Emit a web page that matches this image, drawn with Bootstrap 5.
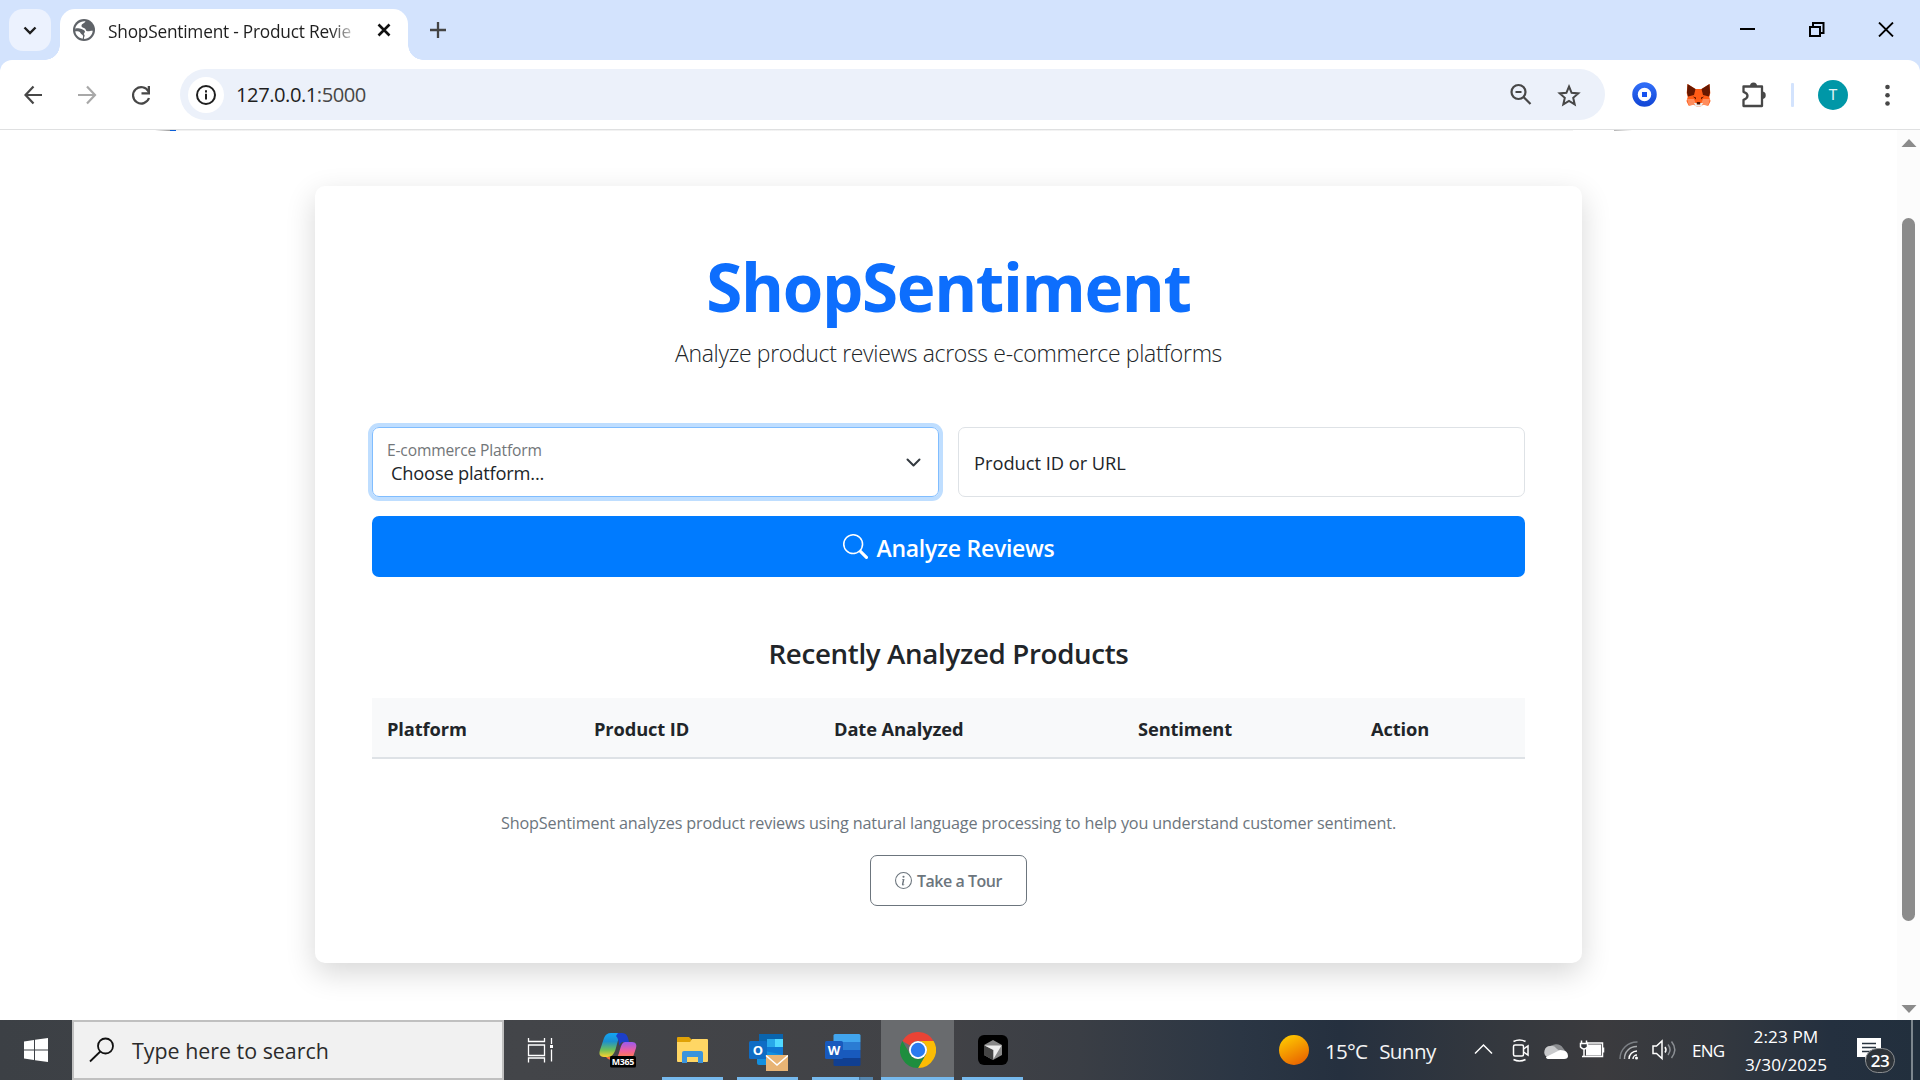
<!DOCTYPE html>
<html lang="en">
<head>
<meta charset="utf-8">
<title>ShopSentiment - Product Review Analysis</title>
<link href="https://cdn.jsdelivr.net/npm/bootstrap@5.3.0/dist/css/bootstrap.min.css" rel="stylesheet">
<style>
body{width:1920px;height:1080px;overflow:hidden;font-family:"Open Sans","Noto Sans",sans-serif;color:#212529;background:#fff}
svg{display:block;flex:none}
.tx{white-space:nowrap}
/* tab strip */
.tabstrip{height:60px;background:#d3e3fd}
.tab-search{width:42px;height:42px;margin:9px 9px 9px 9px;border-radius:14px;background:#ecf2fe}
.tab-active{width:348px;height:51px;margin-top:9px;border-radius:15px 15px 0 0;background:#fff;position:relative;padding:0 0 9px 13px}
.tab-active::before,.tab-active::after{content:"";position:absolute;bottom:0;width:15px;height:15px}
.tab-active::before{left:-15px;background:radial-gradient(circle at 0 0,transparent 14.5px,#fff 15px)}
.tab-active::after{right:-15px;background:radial-gradient(circle at 100% 0,transparent 14.5px,#fff 15px)}
.tab-name{font-size:17.3px;letter-spacing:-.22px;width:251px;margin-left:13px;padding-top:3px;color:#1f1f1f;-webkit-mask-image:linear-gradient(90deg,#000 222px,transparent 251px)}
/* toolbar */
.toolbar-wrap{height:70px;background:#d3e3fd}
.toolbar{height:70px;background:#fff;border-bottom:1px solid #dfe0e1;border-radius:12px 12px 0 0;padding:9px 0 0 0}
.omnibox{width:1425px;height:51px;border-radius:26px;background:#ecf1fa;margin-left:24px}
.site-info{width:36px;height:36px;border-radius:50%;background:#fff;margin-left:8px}
.url{font-size:20.2px;letter-spacing:-.48px;color:#1f1f1f;margin-left:12px}
.url .port{color:#474747}
.avatar-t{width:30px;height:30px;border-radius:50%;background:#0097a7;color:#e4f4f6;font-size:15px;font-family:Roboto,sans-serif}
/* page */
.viewport{height:890px}
.nav-edge{height:1px;background:linear-gradient(90deg,#fff 155px,#999 170px,#0b5ed7 170px,#0b5ed7 176px,#f1f1f1 176px,#f4f4f4 1573px,#fff 1573px,#fff 1614px,#b5b5b5 1614px,#fff 1632px)}
.page-pane{width:1897px}
.main-card{width:1267px;height:777px;margin:55px 0 0 315px;padding:57px;border-radius:10px;background:#fff;box-shadow:0 10px 30px rgba(0,0,0,.16)}
.hero{font-size:65.5px;letter-spacing:-1.35px;line-height:80px;font-weight:700;color:#0d6efd;margin-top:4px}
.sub{font-size:23px;letter-spacing:-.336px;line-height:36px;font-weight:300;margin-top:8px}
.fields{margin-top:56px;gap:19px}
.field{height:70px;border:1px solid #dee2e6;border-radius:7px;flex:1;padding:1px 15px 0}
.field.on{border-color:#80bdff;box-shadow:0 0 0 4px #bfdeff}
.f-label{font-size:15.6px;letter-spacing:-.16px;line-height:20px;color:#727679;margin-left:-1px}
.f-value{font-size:18.3px;letter-spacing:-.21px;line-height:26px;margin-left:3px}
.m-pid{letter-spacing:-.03px}
.go{height:62px;margin-top:19px;padding-top:3px;border-radius:7px;background:#007bff;color:#fff;font-size:23px;letter-spacing:-.265px;font-weight:600;gap:9px}
.go svg{margin-top:-3px}
.sec{font-size:27.7px;letter-spacing:-.33px;line-height:36px;font-weight:600;margin-top:58px}
.grid-head{margin:27px 0 0;width:1153px;table-layout:fixed}
.grid-head th{height:60px;background:#f8f9fa;border-bottom:2px solid #dee2e6;font-size:18.3px;letter-spacing:-.12px;line-height:28px;font-weight:700;padding:2px 0 0 15px;vertical-align:middle}
.note{font-size:16.2px;letter-spacing:-.156px;line-height:26px;color:#6c757d;margin-top:51px}
.tour{width:157px;height:51px;border:1px solid #6c757d;border-radius:7px;color:#6c757d;font-size:16px;letter-spacing:-.47px;font-weight:600;margin-top:19px;gap:5px}
.sbar{width:23px;background:#fcfcfc}
.sthumb{width:13px;height:703px;border-radius:7px;background:#8b8b8b}
/* taskbar */
.taskbar{height:60px;background:linear-gradient(90deg,#3c4045 0,#434549 520px,#414246 950px,#3a3e45 1080px,#2b3644 1240px,#25303f 1340px,#34383e 1500px,#3b3b3e 1600px,#33383f 1720px,#24303f 1830px,#222f3d 1920px);color:#fff}
.start{width:72px}
.find{width:432px;height:60px;border:2px solid #c0c0c0;background:#f1f1f1;color:#2b2b2b;padding-left:15px;font-size:21.4px}
.app{width:75px;height:60px}
.app .bar{height:3px;width:61px;background:#76b9ed}
.app.cur{background:#696b6e}
.app.cur .bar{width:73px}
.app.cur{width:73px;margin:0 1px}
.wx{font-size:20.6px;letter-spacing:-.6px;color:#f4f4f4;padding-top:3px}
.m-deg{letter-spacing:-.8px}
.tray-t{font-size:17px;letter-spacing:-.8px;color:#fff;padding-top:1px}
.clock{width:110px;font-size:17.2px;line-height:28px;letter-spacing:.08px;margin-top:1px}
.count-b{top:11px;width:30px;height:25px;border-radius:13px;background:#2d3339;border:1px solid #8a8d90;font-size:17px;letter-spacing:-.5px;font-weight:600;line-height:23px}
</style>
<script src="https://cdn.jsdelivr.net/npm/bootstrap@5.3.0/dist/js/bootstrap.bundle.min.js"></script>
</head>
<body>
<header>
 <div class="tabstrip d-flex">
  <div class="tab-search d-flex align-items-center justify-content-center"><svg width="14" height="9" fill="none" stroke="#1f1f1f" stroke-width="2.4"><path d="M1.5 1.5 7 7l5.500-5.500"/></svg></div>
  <div class="tab-active d-flex align-items-center">
   <svg width="22" height="22" viewBox="0 0 22 22"><circle cx="11" cy="11" r="11" fill="#5f6368"/><path fill="#fff" d="M12.500 2.300C11 5 8.500 4.500 8.500 7c0 1.800 2.200 1.500 3.400 2.500 1.200 1 .8 2.600 2.600 2.800 2 .2 3.300-.9 5.200-.6-.3 4.700-4 8-8.500 8.200-.9-1.200.6-2.200.4-3.600-.2-1.300-1.800-1.300-2-2.700-.2-1.200.6-2-.5-2.700-1.600-.9-4.600-.6-6.900-.6C2.300 6 7 1.700 12.500 2.300z"/><path fill="#5f6368" d="M2.200 9.500C4.500 9.300 6.500 9 8.500 10c1.600.9 3 .8 3.400 2.300.3 1.300-.9 1.700-1.200 3H6.500L3 12z"/><path fill="#fff" d="M2.300 12.300c2.400-.1 4.300.1 5.200 1.700.8 1.600 2.200 1.500 2.500 3 .2 1-.2 1.700-.3 2.700C5.500 19.100 2.600 16 2.300 12.300z"/></svg>
   <div class="tab-name tx">ShopSentiment - Product Revie</div>
   <svg class="ms-auto" style="margin-right:17px" width="14" height="14" stroke="#111" stroke-width="2.600"><path d="M1.500 1.500l11 11M12.500 1.500l-11 11"/></svg>
  </div>
  <svg style="margin:22px 0 0 22px" width="16" height="16" stroke="#444" stroke-width="2.300"><path d="M8 0v16M0 8h16"/></svg>
  <svg class="ms-auto" style="margin:22px 26px 0 0" width="154" height="15" fill="none" stroke="#000" stroke-width="2"><path d="M0 7h15"/><path d="M70 5h10v9h-10zM73 5V1h10.500v10h-3.500"/><path stroke-width="1.800" d="M139 .5l14 14M153 .5l-14 14"/></svg>
 </div>
 <div class="toolbar-wrap"><div class="toolbar d-flex">
  <svg style="margin:0 0 0 24px" width="132" height="51" fill="none" stroke="#474747" stroke-width="2.200"><path d="M18 26H1.500M9.500 17.500 1.500 26l8 8.500"/><path stroke="#a8a8a8" d="M54 26h17M63 17.500 71 26l-8 8.500"/><path d="M124.500 22.500A8.200 8.200 0 1 0 125 29"/><path fill="#474747" stroke="none" d="M126 17v8.500h-8.500v-2.200h6.200V17z"/></svg>
  <div class="omnibox d-flex align-items-center">
   <div class="site-info d-flex align-items-center justify-content-center"><svg width="20" height="20" fill="none" stroke="#1f1f1f" stroke-width="2"><circle cx="10" cy="10" r="9"/><path d="M10 8.800v5.700M10 5.300v2.200"/></svg></div>
   <div class="url tx">127.0.0.1<span class="port">:5000</span></div>
   <svg class="ms-auto" style="margin-right:24px" width="72" height="24" fill="none" stroke="#474747" stroke-width="2.200"><circle cx="9.500" cy="9" r="7"/><path d="M14.500 14l7 7M6.500 9h6"/><path stroke-width="2" d="M60 3.500l2.600 6.300 6.700.6-5.100 4.400 1.500 6.600-5.700-3.500-5.700 3.500 1.500-6.600-5.100-4.400 6.700-.6z"/></svg>
  </div>
  <svg style="margin-left:27px" width="175" height="51" viewBox="0 0 175 51">
   <defs><linearGradient id="cb" x2="0" y2="1"><stop stop-color="#2f6cf6"/><stop offset="1" stop-color="#1449d8"/></linearGradient></defs>
   <circle cx="12.500" cy="25.500" r="9.500" fill="#fff" stroke="url(#cb)" stroke-width="5.500"/><rect x="10" y="23" width="5" height="5" fill="#1652f0"/>
   <path fill="#ff5c16" d="M55.500 15l8 5h6l8-5 .8 9-1 4 1.200 4-2 4.500-5-1-3 2h-4l-3-2-5 1-2-4.500 1.200-4-1-4z"/><path fill="#661800" d="M55.500 15l8 5-1.500 6-6 1.500-1-4zM77.500 15l-8 5 1.500 6 6 1.500 1-4z"/><path fill="#ff8d5d" d="M55 30l7 0 2 5-7 2zM78 30l-7 0-2 5 7 2z"/><path fill="#eee" d="M62 34h9l-1.500 3.500h-6z"/><path fill="#551500" d="M61 27.500l3 1v2zM72 27.500l-3 1v2zM64.800 33h3.400v2.500h-3.400z"/>
   <path fill="none" stroke="#474747" stroke-width="2.300" stroke-linejoin="round" d="M111.500 17.500h18.500v19.500h-18.500v-6.200q4-1.300 4-4t-4-4z"/><path fill="#474747" d="M118 17a3.500 3.500 0 0 1 7 0zM130 22.500a3.500 3.500 0 0 1 0 7.500z"/>
   <rect x="159" y="14" width="3" height="24" rx="1" fill="#d3e3fd"/>
  </svg>
  <div class="avatar-t d-flex align-items-center justify-content-center" style="margin:11px 0 0 11px">T</div>
  <svg style="margin-left:36px" width="8" height="51" fill="#474747"><circle cx="3.500" cy="18" r="2.300"/><circle cx="3.500" cy="26.200" r="2.300"/><circle cx="3.500" cy="34.500" r="2.300"/></svg>
 </div></div>
</header>
<main class="viewport d-flex">
 <section class="page-pane">
  <div class="nav-edge"></div>
  <div class="main-card d-flex flex-column">
   <h1 class="hero text-center mb-0"><span class="tx">ShopSentiment</span></h1>
   <p class="sub text-center mb-0"><span class="tx">Analyze product reviews across e-commerce platforms</span></p>
   <div class="fields d-flex">
    <div class="field on d-flex align-items-center justify-content-between">
     <div><div class="f-label tx">E-commerce Platform</div><div class="f-value tx">Choose platform...</div></div>
     <svg width="15" height="9" style="margin-right:2px" fill="none" stroke="#343a40" stroke-width="2" stroke-linecap="round" stroke-linejoin="round"><path d="M1.500 1.500l6 6 6-6"/></svg>
    </div>
    <div class="field d-flex align-items-center"><span class="tx f-value ms-0 m-pid">Product ID or URL</span></div>
   </div>
   <div class="go d-flex align-items-center justify-content-center">
    <svg width="25" height="25" viewBox="0 0 16 16" fill="#fff"><path d="M11.742 10.344a6.500 6.500 0 1 0-1.397 1.398h-.001c.03.04.062.078.098.115l3.850 3.850a1 1 0 0 0 1.415-1.414l-3.850-3.850a1.007 1.007 0 0 0-.115-.1zM12 6.500a5.500 5.500 0 1 1-11 0 5.500 5.500 0 0 1 11 0z"/></svg>
    <span class="tx">Analyze Reviews</span>
   </div>
   <h2 class="sec text-center mb-0"><span class="tx">Recently Analyzed Products</span></h2>
   <table class="grid-head"><colgroup><col style="width:207px"><col style="width:240px"><col style="width:304px"><col style="width:233px"><col></colgroup>
    <thead><tr><th>Platform</th><th>Product ID</th><th>Date Analyzed</th><th>Sentiment</th><th>Action</th></tr></thead></table>
   <p class="note text-center mb-0"><span class="tx">ShopSentiment analyzes product reviews using natural language processing to help you understand customer sentiment.</span></p>
   <div class="tour d-flex align-items-center justify-content-center align-self-center">
    <svg width="17" height="17" viewBox="0 0 16 16" fill="#6c757d"><path d="M8 15A7 7 0 1 1 8 1a7 7 0 0 1 0 14zm0 1A8 8 0 1 0 8 0a8 8 0 0 0 0 16z"/><path d="m8.930 6.588-2.290.287-.082.380.450.083c.294.070.352.176.288.469l-.738 3.468c-.194.897.105 1.319.808 1.319.545 0 1.178-.252 1.465-.598l.088-.416c-.2.176-.492.246-.686.246-.275 0-.375-.193-.304-.533L8.930 6.588zM9 4.500a1 1 0 1 1-2 0 1 1 0 0 1 2 0z"/></svg>
    <span class="tx">Take a Tour</span>
   </div>
  </div>
 </section>
 <aside class="sbar d-flex flex-column align-items-center">
  <svg width="16" height="9" style="margin-top:9px" fill="#8b8b8b"><path d="M.5 8 8 0l7.500 8z"/></svg>
  <div class="sthumb" style="margin-top:70px"></div>
  <svg class="mt-auto" width="16" height="9" style="margin-bottom:7px" fill="#8b8b8b"><path d="M.5 1 8 9l7.500-8z"/></svg>
 </aside>
</main>
<footer class="taskbar d-flex">
 <div class="start d-flex align-items-center justify-content-center"><svg width="24" height="24" fill="#fff"><path d="M0 3.400 10 2v9.500H0zM11 1.800 24 0v11.500H11zM0 12.500h10V22L0 20.600zM11 12.500h13V24l-13-1.800z"/></svg></div>
 <div class="find d-flex align-items-center">
  <svg width="26" height="26" fill="none" stroke="#111" stroke-width="1.800"><circle cx="16.500" cy="9" r="7.500"/><path d="M11.300 14.500 1 24.500"/></svg>
  <span class="tx" style="margin:3px 0 0 17px">Type here to search</span>
 </div>
 <div class="app d-flex align-items-center justify-content-center me-px" style="margin-right:1px"><svg width="30" height="26" fill="none" stroke="#fff" stroke-width="1.300"><path d="M1.500 1v3.500h16V1M1.500 8h16v10.500h-16zM1.500 25.500V21h16v4.500M24.500 1v6M24.500 12.500v12"/><path fill="#fff" stroke="none" d="M23 8h3v3h-3z"/></svg></div>
 <div class="app d-flex align-items-center justify-content-center">
  <svg width="38" height="36" viewBox="0 0 38 36"><defs><linearGradient id="ma" x2="0" y2="1"><stop stop-color="#12a4f4"/><stop offset=".35" stop-color="#1b8fd0"/><stop offset=".7" stop-color="#6cbf5a"/><stop offset="1" stop-color="#ffd22e"/></linearGradient><linearGradient id="mb" x2="0" y2="1"><stop stop-color="#9a5af0"/><stop offset=".6" stop-color="#f0609a"/><stop offset="1" stop-color="#ff7a50"/></linearGradient></defs>
  <path fill="url(#ma)" d="M12 1h11c-5 5-5 15-8 20-2 3-4 4-7 4H5c-5 0-5-4-4-7L5 6q2-5 7-5z"/><path fill="#1c3fc8" d="M19 1h4c5 0 6 4 7 9h-4c-3 0-4 0-6 4 0-5-1-8-3-10z"/><path fill="url(#mb)" d="M26 10h7c4 0 5 3 4 6l-3 9H18c3-3 3-15 8-15z"/><path fill="#f36d3c" d="M7 25h5v3q-3 0-5-3z"/><rect x="11" y="24" width="26" height="11.500" rx="1.500" fill="#000"/><text x="24" y="33" font-family="Open Sans" font-weight="700" font-size="8.800" fill="#fff" text-anchor="middle" textLength="22.500">M365</text></svg></div>
 <div class="app d-flex flex-column align-items-center justify-content-between"><svg style="margin-top:16px" width="33" height="28"><path fill="#e0a106" d="M1 2q0-1 1-1h11l3 3-3 4H1z"/><path fill="#ffd664" d="M1 6h13l2-3h15q1 0 1 1v21q0 1-1 1H2q-1 0-1-1z"/><path fill="#3a94dd" d="M6 27V17q0-2 2-2h17q2 0 2 2v10h-5v-6H11v6z"/></svg><div class="bar"></div></div>
 <div class="app d-flex flex-column align-items-center justify-content-between"><svg style="margin-top:13px" width="40" height="39"><path fill="#0a64ad" d="M11 1h24v15H11z"/><path fill="#28a8ea" d="M19 6h8v8h-8z"/><path fill="#50d9ff" d="M27 6h8v8h-8z"/><path fill="#0f78d4" d="M11 14h24v8H11z"/><path fill="#1490df" d="M9 16l26 6v10H11q-2 0-2-2z"/><rect x="1" y="8" width="18" height="18" rx="1.500" fill="#0f6cc4"/><text x="10" y="21.500" font-family="Open Sans" font-weight="700" font-size="13" fill="#fff" text-anchor="middle">O</text><path fill="#e8b475" d="M18 22h22v16H18z"/><path fill="none" stroke="#fff" stroke-width="1.600" d="M18 22.500l11 9.500 11-9.500"/></svg><div class="bar"></div></div>
 <div class="app d-flex flex-column align-items-center justify-content-between"><svg style="margin-top:13px" width="36" height="34"><path fill="#41a5ee" d="M10 1h24q1.500 0 1.500 1.500V9H8.500V2.500Q8.500 1 10 1z"/><path fill="#2b7cd3" d="M8.500 9h27v8h-27z"/><path fill="#185abd" d="M8.500 17h27v8h-27z"/><path fill="#103f91" d="M8.500 25h27v6.500q0 1.500-1.500 1.500H10q-1.500 0-1.500-1.500z"/><rect y="8" width="18" height="18" rx="1.500" fill="#185abd"/><text x="9" y="21.500" font-family="Open Sans" font-weight="700" font-size="13" fill="#fff" text-anchor="middle">W</text></svg><div class="bar" style="background:linear-gradient(90deg,#76b9ed 47px,#3f6c94 47px,#5585ad 49px)"></div></div>
 <div class="app cur d-flex flex-column align-items-center justify-content-between"><svg style="margin-top:12px" width="36" height="36" viewBox="0 0 36 36"><path fill="#ea4335" d="M2.400 9A18 18 0 0 1 33.600 9H18a9 9 0 0 0-7.800 4.500z"/><path fill="#fbbc04" d="M33.600 9A18 18 0 0 1 18 36l7.800-13.500A9 9 0 0 0 18 9z"/><path fill="#1e8e3e" d="M2.400 9l7.800 13.500A9 9 0 0 0 25.800 22.500L18 36A18 18 0 0 1 2.400 9z"/><circle cx="18" cy="18" r="9" fill="#fff"/><circle cx="18" cy="18" r="7.200" fill="#2a7af0"/></svg><div class="bar"></div></div>
 <div class="app d-flex flex-column align-items-center justify-content-between"><svg style="margin-top:15px" width="30" height="30"><rect width="30" height="30" rx="6" fill="#000"/><path fill="#888" d="M15 5l9 5v10l-9 5-9-5V10z"/><path fill="#444" d="M6 10l9 5v10l-9-5z"/><path fill="#eee" d="M6.500 10.500h17L15.500 24v-9z"/></svg><div class="bar"></div></div>
 <div class="ms-auto d-flex align-items-center tx" style="width:641px">
  <svg width="30" height="30"><defs><linearGradient id="su" x1=".2" x2=".7" y2="1"><stop stop-color="#ffcb00"/><stop offset="1" stop-color="#e96300"/></linearGradient></defs><circle cx="15" cy="15" r="15" fill="url(#su)"/></svg>
  <span class="wx m-deg" style="margin-left:16px">15°C</span><span class="wx" style="margin-left:12px">Sunny</span>
  <svg class="ms-auto" width="205" height="26" fill="none" stroke="#fff" stroke-width="1.500">
   <path d="M1 16.500 9.500 8l8.500 8.500"/>
   <rect x="39.500" y="8" width="10" height="11" rx="1.500"/><path d="M49.500 12l4.500-3v9l-4.500-3M39.500 4.500q6-3 12 0M39.500 22.500q6 3 12 0"/>
   <path stroke="none" fill="#8b8d90" d="M75 12a8 8 0 0 1 14-1l4 5-12 3z"/><path stroke="none" fill="#c9cacc" d="M73 20a6 6 0 0 1 3-11q4-1 7 3l6 4-8 6z"/><path stroke="none" fill="#fff" d="M72 20l14-7q8 0 8 6 0 3-4 3H75q-3 0-3-2z"/>
   <rect x="112" y="7.500" width="15" height="11" fill="#fff" stroke="none"/><path d="M113 6h15.500v13.500H108M129.500 10.500v5M107.500 3.500v3M112.500 3.500v3M110 12v8"/><path fill="#35383e" d="M106.500 6.500h7v3.500q-3.500 4-7 0z"/>
   <path stroke="#7b7f84" d="M146 22A17 17 0 0 1 163.500 5"/><path stroke="#a8abae" d="M150.500 22A12 12 0 0 1 163 9.500"/><path d="M155 22a8 8 0 0 1 8-8M159 22a4 4 0 0 1 4-4"/><circle cx="162.500" cy="21" r="1.500" fill="#fff" stroke="none"/>
   <path d="M179 9h3.500l5.500-5v17.500l-5.500-5H179z"/><path d="M191 10q2 3 0 5.500"/><path stroke="#8b8f94" d="M194 7.500q4 5 0 10.500M197.500 4.500q6.500 8 0 16.500"/>
  </svg>
  <span class="tray-t" style="margin-left:13px;width:39px">ENG</span>
  <div class="clock text-center d-flex flex-column"><span>2:23 PM</span><span>3/30/2025</span></div>
  <div class="position-relative" style="width:54px;height:26px;margin-left:16px"><svg width="26" height="26"><path fill="#fff" d="M0 1h24v19H13l-5 5v-5H0z"/><path stroke="#2a3540" stroke-width="1.500" d="M5 6.500h14M5 10.500h14M5 14.500h14"/></svg><div class="count-b position-absolute text-center" style="left:8px">23</div></div>
  <div style="width:2px;height:60px;background:#7d868e;margin-right:7px"></div>
 </div>
</footer>
</body>
</html>
